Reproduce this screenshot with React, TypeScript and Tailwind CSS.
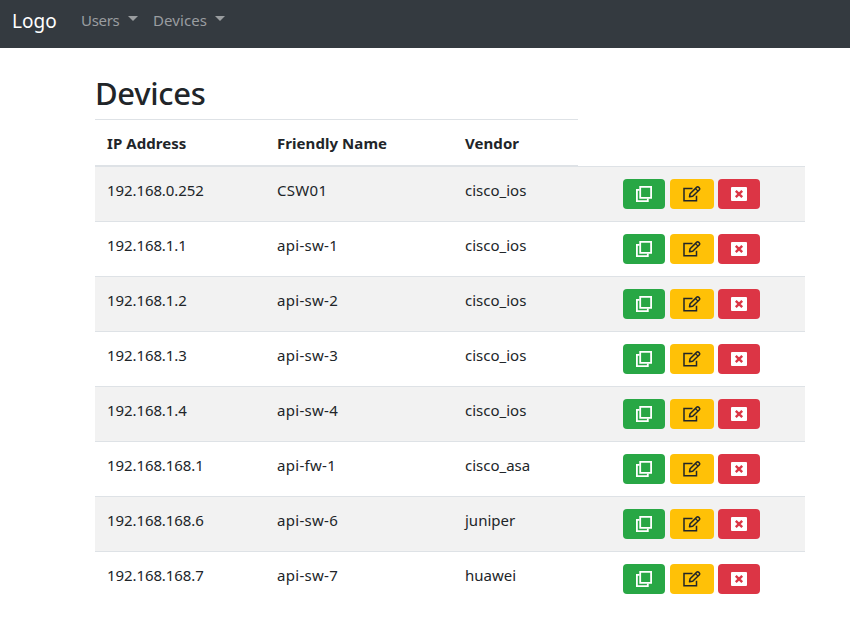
const devices = [
  { ip: '192.168.0.252', name: 'CSW01', vendor: 'cisco_ios' },
  { ip: '192.168.1.1', name: 'api-sw-1', vendor: 'cisco_ios' },
  { ip: '192.168.1.2', name: 'api-sw-2', vendor: 'cisco_ios' },
  { ip: '192.168.1.3', name: 'api-sw-3', vendor: 'cisco_ios' },
  { ip: '192.168.1.4', name: 'api-sw-4', vendor: 'cisco_ios' },
  { ip: '192.168.168.1', name: 'api-fw-1', vendor: 'cisco_asa' },
  { ip: '192.168.168.6', name: 'api-sw-6', vendor: 'juniper' },
  { ip: '192.168.168.7', name: 'api-sw-7', vendor: 'huawei' },
];

function Caret() {
  return (
    <span className="mb-[3px] h-0 w-0 border-x-[5px] border-t-[5px] border-x-transparent border-t-[#9a9da0]" />
  );
}

function CopyIcon() {
  return (
    <svg width="18" height="18" viewBox="0 0 18 18" fill="none" stroke="#fff">
      <path d="M5.2 1.9h10.9v10.9H5.2z" strokeWidth="1.8" />
      <path d="M4.5 4.9H1.9v11.2h10.9v-2.6" strokeWidth="1.8" />
    </svg>
  );
}

function EditIcon() {
  return (
    <svg width="20" height="18" viewBox="0 0 20 18" fill="none" stroke="#212529" strokeWidth="1.5">
      <path d="M10.5 3.5H2v12.2h12.5v-5" />
      <path d="M7.5 11.8l.6-3.1 6.7-6.6a1.2 1.2 0 0 1 1.7 0l.9.9a1.2 1.2 0 0 1 0 1.7l-6.7 6.6z" strokeLinejoin="round" />
      <path d="M13.4 3.5l2.6 2.6" strokeWidth="1.2" />
    </svg>
  );
}

function DeleteIcon() {
  return (
    <svg width="16" height="14" viewBox="0 0 16 14">
      <rect width="16" height="14" rx="1" fill="#fff" />
      <path d="M4.8 3.8l6.4 6.4M11.2 3.8l-6.4 6.4" stroke="#dc3545" strokeWidth="2.4" />
    </svg>
  );
}

export default function App() {
  return (
    <div className="min-h-[642px] w-[850px] bg-white font-['Noto_Sans','Open_Sans',sans-serif] text-[15px] leading-6 text-[#212529]">
      <nav className="flex h-12 items-center bg-[#343a40] pb-[8px] pl-3">
        <a className="w-[69px] pt-px text-[19px] leading-[30px] text-white">Logo</a>
        <a className="flex w-[72px] items-center text-[#9a9da0]">
          <span className="w-[47px] tracking-[-0.3px]">Users</span>
          <Caret />
        </a>
        <a className="flex items-center text-[#9a9da0]">
          <span className="w-[62px] tracking-[0.1px]">Devices</span>
          <Caret />
        </a>
      </nav>
      <main className="ml-[95px] w-[710px] pt-[26px]">
        <h2 className="h-[45px] text-[31px] font-medium leading-[38px] tracking-[-0.3px]">Devices</h2>
        <table className="w-[710px] table-fixed border-separate border-spacing-0 text-left">
          <colgroup>
            <col className="w-[170px]" />
            <col className="w-[188px]" />
            <col className="w-[125px]" />
            <col className="w-[227px]" />
          </colgroup>
          <thead>
            <tr className="h-[47px]">
              {['IP Address', 'Friendly Name', 'Vendor'].map((title) => (
                <th key={title} className="border-b border-t border-[#dee2e6] px-3 py-0 font-bold tracking-[0.06px]">
                  {title}
                </th>
              ))}
              <td />
            </tr>
          </thead>
          <tbody>
            {devices.map((d) => (
              <tr key={d.ip} className="h-[55px] align-top odd:bg-[#f2f2f2]">
                <td className="border-t border-[#dee2e6] px-3 pt-[11px] tracking-[-0.09px]">{d.ip}</td>
                <td className="border-t border-[#dee2e6] px-3 pt-[11px] tracking-[0.3px]">{d.name}</td>
                <td className="border-t border-[#dee2e6] px-3 pt-[11px]">{d.vendor}</td>
                <td className="border-t border-[#dee2e6] pl-[45px] pt-3">
                  <div className="flex">
                    <button className="flex h-[30px] w-[42px] items-center justify-center rounded bg-[#28a745]">
                      <CopyIcon />
                    </button>
                    <button className="ml-[5px] flex h-[30px] w-11 items-center justify-center rounded bg-[#ffc107]">
                      <EditIcon />
                    </button>
                    <button className="ml-1 flex h-[30px] w-[42px] items-center justify-center rounded bg-[#dc3545]">
                      <DeleteIcon />
                    </button>
                  </div>
                </td>
              </tr>
            ))}
          </tbody>
        </table>
      </main>
    </div>
  );
}
